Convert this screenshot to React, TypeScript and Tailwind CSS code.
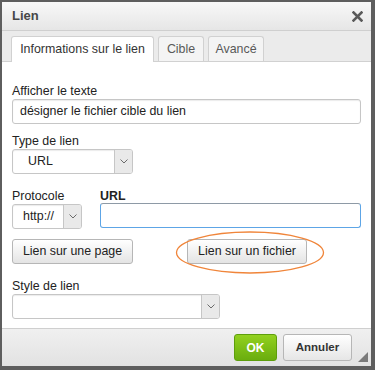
import React from "react";

function Chevron() {
  return (
    <svg width="8" height="5" viewBox="0 0 8 5" className="block">
      <path d="M0.5 0.5 L4 4 L7.5 0.5" fill="none" stroke="#6b6b6b" strokeWidth="1" />
    </svg>
  );
}

function Select({ width, value, pl }: { width: string; value: string; pl: string }) {
  return (
    <div className={`flex h-[25px] ${width} rounded-[3px] border border-[#c6c6c6] bg-white shadow-[inset_0_1px_1px_rgba(0,0,0,0.08)] overflow-hidden`}>
      <div className={`flex-1 flex items-center ${pl} text-[#222]`}>{value}</div>
      <div className="w-[18px] flex items-center justify-center bg-[#e9e9e9] border-l border-[#c6c6c6]">
        <Chevron />
      </div>
    </div>
  );
}

export default function App() {
  return (
    <div className="w-[375px] h-[370px] bg-[#5e5e5e] pt-[2px] pl-[2px] pr-[4px] pb-[4px] font-['Liberation_Sans',Arial,sans-serif] text-[12.4px] text-[#222]">
      <div className="h-full flex flex-col bg-white">
        {/* Title */}
        <div className="h-[29px] flex items-center justify-between pl-[10px] pr-[8px] border-b border-[#cfcfcf] bg-gradient-to-b from-[#f8f8f8] to-[#e6e6e6]">
          <span className="text-[13px] font-bold text-[#474747]">Lien</span>
          <svg width="11" height="11" viewBox="0 0 11 11" className="block">
            <path d="M1.5 1.5 L9.5 9.5 M9.5 1.5 L1.5 9.5" stroke="#5a5a5a" strokeWidth="2.6" strokeLinecap="square" />
          </svg>
        </div>
        {/* Tabs */}
        <div className="h-[31px] flex items-end gap-[4px] pl-[9px] bg-[#ebebeb] border-b border-[#d1d1d1]">
          <div className="w-[143px] h-[26px] -mb-px flex items-center justify-center bg-white border border-b-0 border-[#d1d1d1] rounded-t-[3px] text-[#333]">
            Informations sur le lien
          </div>
          <div className="w-[46px] h-[25px] flex items-center justify-center bg-[#f4f4f4] border border-b-0 border-[#d1d1d1] rounded-t-[3px] text-[#595959]">
            Cible
          </div>
          <div className="w-[56px] h-[25px] flex items-center justify-center bg-[#f4f4f4] border border-b-0 border-[#d1d1d1] rounded-t-[3px] text-[#595959]">
            Avancé
          </div>
        </div>
        {/* Content */}
        <div className="h-[266px] flex flex-col pt-[21px] pl-[10px] pr-[10px]">
          <div className="leading-[16px] h-[16px]">Afficher le texte</div>
          <div className="h-[25px] w-full rounded-[3px] border border-[#c6c6c6] bg-white shadow-[inset_0_1px_1px_rgba(0,0,0,0.08)] flex items-center pl-[7px]">
            désigner le fichier cible du lien
          </div>

          <div className="mt-[9px] leading-[16px] h-[16px]">Type de lien</div>
          <Select width="w-[121px]" value="URL" pl="pl-[15px]" />

          <div className="mt-[14px] flex">
            <div className="flex flex-col w-[88px]">
              <div className="leading-[16px] h-[16px]">Protocole</div>
              <Select width="w-[70px]" value="http://" pl="pl-[10px]" />
            </div>
            <div className="flex flex-col flex-1">
              <div className="leading-[16px] h-[16px] font-bold text-[#222]">URL</div>
              <div className="h-[25px] -mt-px w-full rounded-[3px] border border-[#5da5e6] border-t-[#8e9aa6] bg-white" />
            </div>
          </div>

          <div className="mt-[10px] flex relative">
            <div className="w-[121px] h-[25px] flex items-center justify-center rounded-[3px] border border-[#b6b6b6] bg-gradient-to-b from-[#ffffff] to-[#e4e4e4] text-[#222]">
              Lien sur une page
            </div>
            <div className="ml-[54px] w-[120px] h-[25px] flex items-center justify-center rounded-[3px] border border-[#b6b6b6] bg-gradient-to-b from-[#ffffff] to-[#e4e4e4] text-[#222]">
              Lien sur un fichier
            </div>
            <svg width="150" height="43" viewBox="0 0 150 43" className="absolute left-[163px] top-[-8px] pointer-events-none">
              <ellipse cx="75" cy="21.5" rx="73.5" ry="20.5" fill="none" stroke="#f0853a" strokeWidth="1.3" />
            </svg>
          </div>

          <div className="mt-[14px] leading-[16px] h-[16px]">Style de lien</div>
          <Select width="w-[208px]" value="" pl="pl-[10px]" />
        </div>
        {/* Footer */}
        <div className="relative h-[38px] flex items-center justify-end gap-[6px] pr-[19px] border-t border-[#cfcfcf] bg-gradient-to-b from-[#f0f0f0] to-[#e2e2e2]">
          <div className="w-[43px] h-[27px] flex items-center justify-center rounded-[3px] border border-[#5e9e0c] bg-gradient-to-b from-[#92d11f] to-[#6aad0e] text-white font-bold text-[12px]">
            OK
          </div>
          <div className="w-[69px] h-[27px] flex items-center justify-center rounded-[3px] border border-[#b6b6b6] bg-gradient-to-b from-[#ffffff] to-[#e6e6e6] text-[#333] font-bold text-[11.5px]">
            Annuler
          </div>
          <svg width="10" height="10" viewBox="0 0 10 10" className="absolute right-[3px] bottom-[4px]">
            <path d="M10 0 L10 10 L0 10 Z" fill="#7a7a7a" />
          </svg>
        </div>
      </div>
    </div>
  );
}
